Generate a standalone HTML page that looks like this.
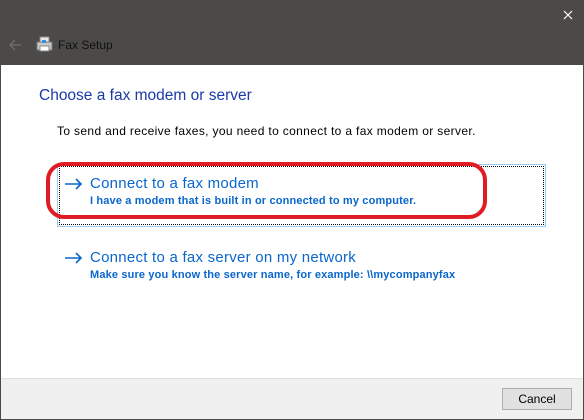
<!DOCTYPE html>
<html><head><style>
*{margin:0;padding:0;box-sizing:border-box}
body{width:584px;height:420px;background:#4b4a48;font-family:"Liberation Sans",sans-serif;position:relative;overflow:hidden}
.abs{position:absolute;white-space:nowrap}
#body{position:absolute;left:1px;top:65px;width:582px;height:313px;background:#fff}
#foot{position:absolute;left:1px;top:378px;width:582px;height:41px;background:#f0f0f0;border-top:1px solid #dfdfdf}
</style></head><body>
<svg class="abs" style="left:563px;top:10px" width="10" height="10"><path d="M1 1L9 9M9 1L1 9" stroke="#fff" stroke-width="1.2"/></svg>
<svg class="abs" style="left:8px;top:39px" width="14" height="12"><path d="M13 6H2M7 1L2 6L7 11" stroke="#6e6e6e" stroke-width="1.3" fill="none"/></svg>
<svg class="abs" style="left:36px;top:36px" width="17" height="17"><rect x="4" y="1" width="9" height="6" fill="#e8e8e8" stroke="#888"/><rect x="1" y="6" width="15" height="8" fill="#c8c8c8" stroke="#777"/><rect x="6" y="4" width="4" height="3" fill="#3a8ee0"/><rect x="4" y="10" width="9" height="5" fill="#fff" stroke="#888"/></svg>
<div class="abs" style="left:58px;top:38px;font-size:12px;color:#111">Fax Setup</div>
<div id="body"></div>
<div class="abs" style="left:39px;top:87px;font-size:15.5px;color:#1a3aa8">Choose a fax modem or server</div>
<div class="abs" style="left:57px;top:124px;font-size:12px;letter-spacing:0.35px;color:#000">To send and receive faxes, you need to connect to a fax modem or server.</div>
<div class="abs" style="left:57px;top:164px;width:489px;height:63px;border:1px solid #99c9ef"></div>
<div class="abs" style="left:59px;top:166px;width:485px;height:59px;border:1px dotted #000"></div>
<svg class="abs" style="left:65px;top:178px" width="18" height="12"><path d="M0 6H16M11 1L16 6L11 11" stroke="#0a66cc" stroke-width="1.6" fill="none"/></svg>
<div class="abs" style="left:90px;top:175px;font-size:15px;letter-spacing:0.25px;color:#0a66cc">Connect to a fax modem</div>
<div class="abs" style="left:90px;top:195px;font-size:11px;font-weight:bold;letter-spacing:0.15px;color:#0a66cc">I have a modem that is built in or connected to my computer.</div>
<svg class="abs" style="left:65px;top:252px" width="18" height="12"><path d="M0 6H16M11 1L16 6L11 11" stroke="#0a66cc" stroke-width="1.6" fill="none"/></svg>
<div class="abs" style="left:90px;top:249px;font-size:15px;letter-spacing:0.25px;color:#0a66cc">Connect to a fax server on my network</div>
<div class="abs" style="left:90px;top:269px;font-size:11px;font-weight:bold;letter-spacing:0.15px;color:#0a66cc">Make sure you know the server name, for example: \\mycompanyfax</div>
<div class="abs" style="left:46px;top:162px;width:441px;height:57px;border:4px solid #e01b24;border-radius:18px"></div>
<div id="foot"></div>
<div class="abs" style="left:502px;top:388px;width:70px;height:22px;border:1px solid #adadad;background:#e1e1e1;font-size:12px;text-align:center;line-height:20px;color:#000">Cancel</div>
</body></html>
